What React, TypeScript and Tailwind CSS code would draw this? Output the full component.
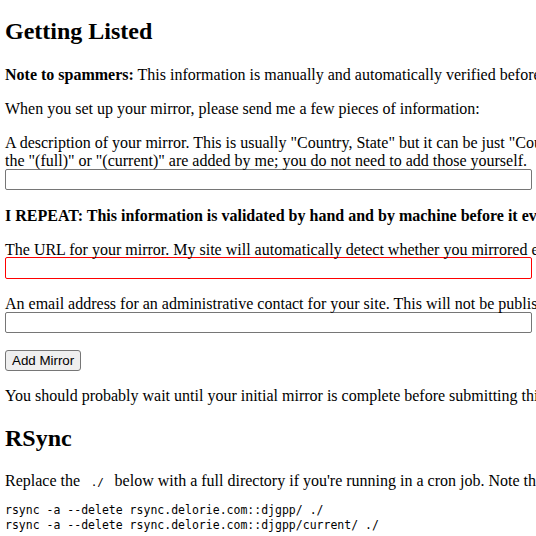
export default function App() {
  return (
    <div className="h-screen w-screen overflow-hidden bg-white font-['Liberation_Serif',serif] text-[16px] leading-[normal] text-black">
      <div className="whitespace-nowrap px-[5px] pt-[18px]">
        <h2 className="mb-[21px] text-[24px] font-bold">Getting Listed</h2>

        <p className="mb-4">
          <b>Note to spammers:</b> This information is manually and automatically verified before it is ever
          published, so don't bother submitting anything that isn't a real mirror.
        </p>

        <p className="mb-4">When you set up your mirror, please send me a few pieces of information:</p>

        <form onSubmit={(e) => e.preventDefault()}>
          <p className="mb-[17px]">
            A description of your mirror. This is usually "Country, State" but it can be just "Country" or
            "Country, City" if you prefer. Note that
            <br />
            the "(full)" or "(current)" are added by me; you do not need to add those yourself.
            <input
              type="text"
              className="-mt-px block h-[21px] w-[527px] appearance-none rounded-[2px] border border-solid border-[#767676] bg-white px-[2px] font-['Liberation_Sans',sans-serif] text-[13.33px]"
            />
          </p>

          <p className="mb-4">
            <b>I REPEAT: This information is validated by hand and by machine before it ever shows up on the site.</b>
          </p>

          <p className="mb-4">
            The URL for your mirror. My site will automatically detect whether you mirrored everything or just the
            current release.
            <input
              type="text"
              className="-mt-[2px] block h-[22px] w-[527px] appearance-none rounded-[2px] border border-solid border-[#ff0000] bg-white px-[2px] font-['Liberation_Sans',sans-serif] text-[13.33px]"
            />
          </p>

          <p className="mb-[17px]">
            An email address for an administrative contact for your site. This will not be published anywhere.
            <input
              type="text"
              className="-mt-px block h-[21px] w-[527px] appearance-none rounded-[2px] border border-solid border-[#767676] bg-white px-[2px] font-['Liberation_Sans',sans-serif] text-[13.33px]"
            />
          </p>

          <p className="mb-4">
            <button
              type="submit"
              className="h-[21px] rounded-[3px] border border-solid border-[#767676] bg-[#efefef] px-[6px] font-['Liberation_Sans',sans-serif] text-[13.33px] leading-none text-black"
            >
              Add Mirror
            </button>
          </p>
        </form>

        <p className="mb-[20px]">
          You should probably wait until your initial mirror is complete before submitting this form.
        </p>

        <h2 className="mb-[20px] text-[24px] font-bold">RSync</h2>

        <p className="mb-[13px]">
          Replace the <code className="font-['DejaVu_Sans_Mono',monospace] text-[11px]">{'\u00a0./\u00a0'}</code>{' '}
          below with a full directory if you're running in a cron job. Note that the trailing slashes are important.
        </p>

        <pre className="font-['DejaVu_Sans_Mono',monospace] text-[11.5px] leading-[15px]">
          {'rsync -a --delete rsync.delorie.com::djgpp/ ./\nrsync -a --delete rsync.delorie.com::djgpp/current/ ./'}
        </pre>
      </div>
    </div>
  );
}
